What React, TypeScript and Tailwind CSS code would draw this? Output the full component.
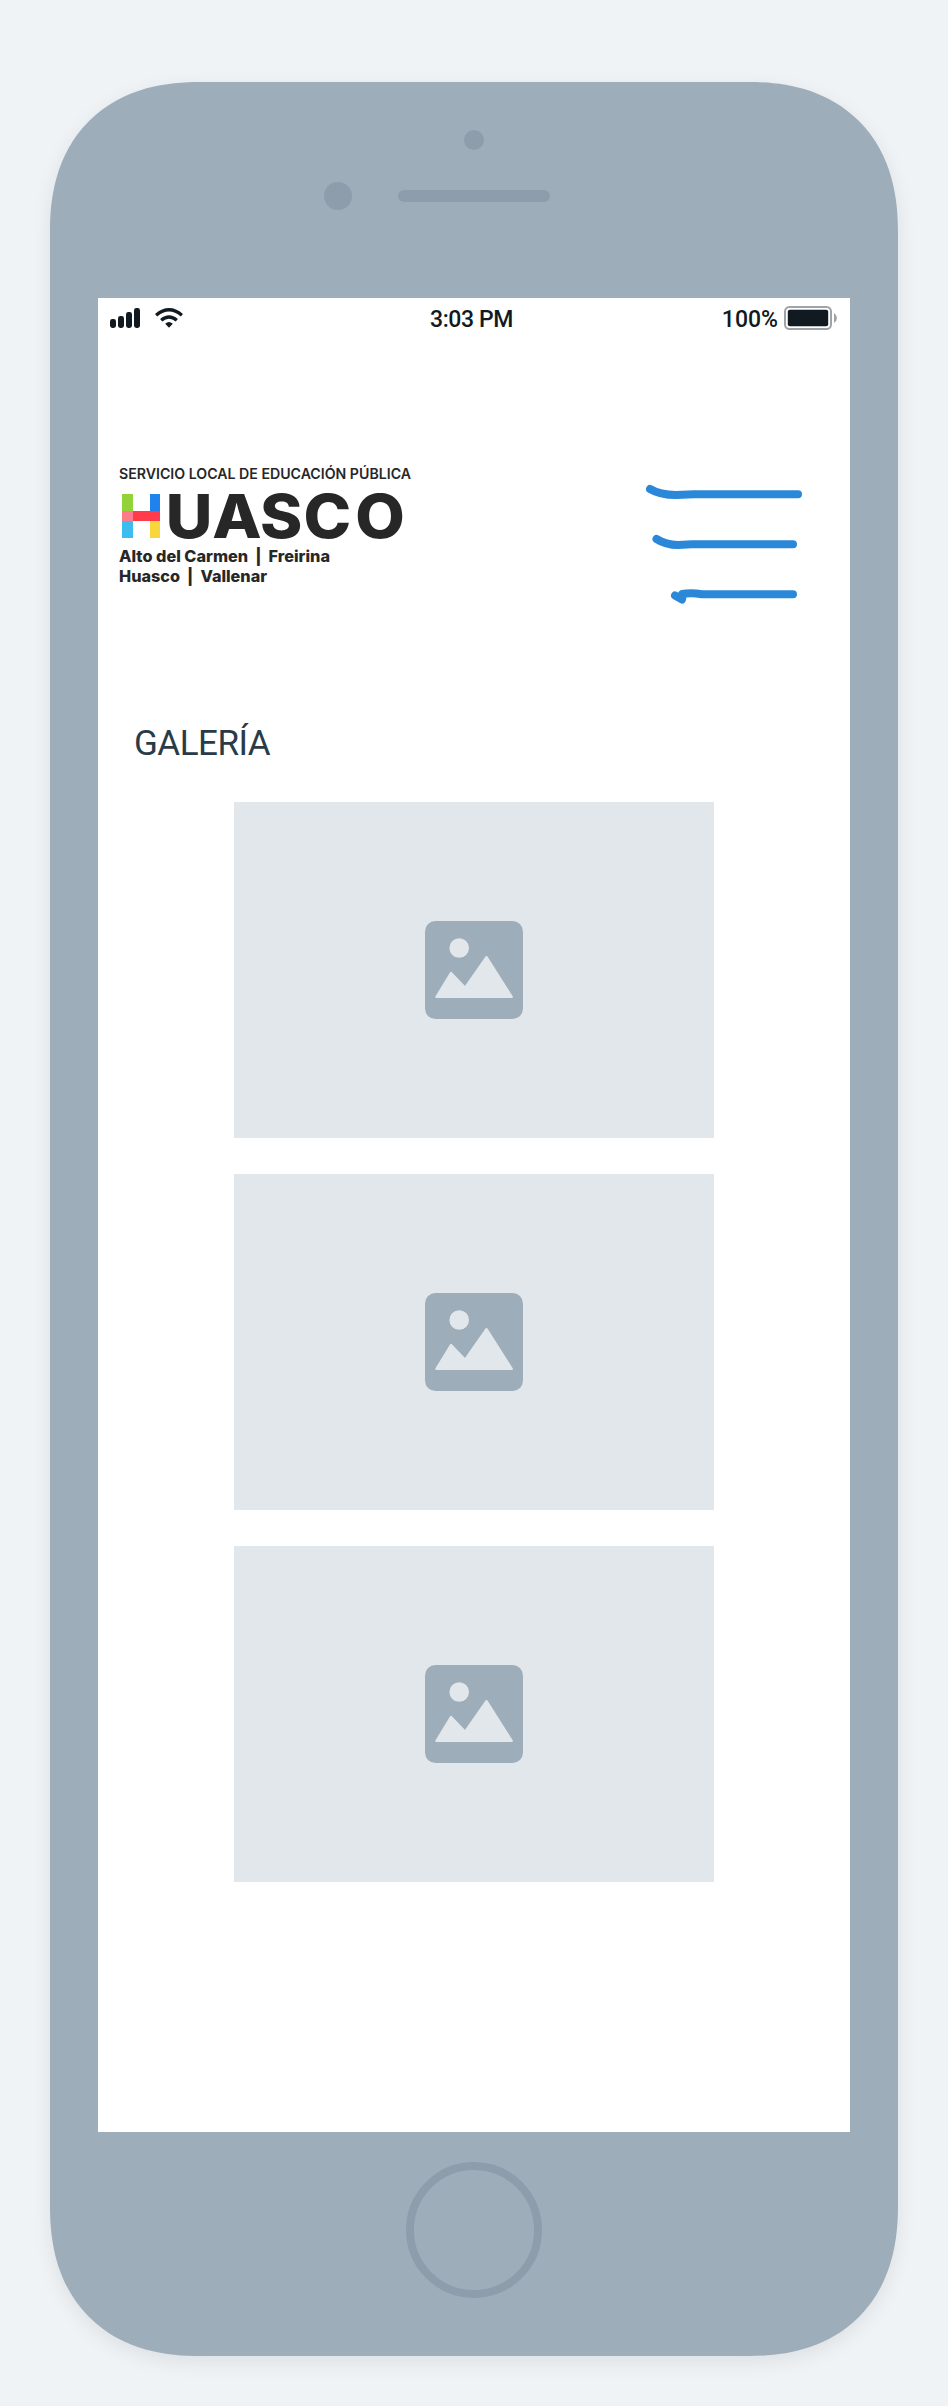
function SignalIcon() {
  return (
    <svg className="h-5 w-[30px]" viewBox="0 0 30 20" fill="#111a21">
      <rect x="0" y="11" width="6" height="9" rx="2.4" />
      <rect x="8" y="8" width="6" height="12" rx="2.4" />
      <rect x="16" y="4" width="6" height="16" rx="2.4" />
      <rect x="24" y="0" width="6" height="20" rx="2.4" />
    </svg>
  );
}

function WifiIcon() {
  return (
    <svg className="h-5 w-7" viewBox="0 0 28 20" fill="none" stroke="#111a21">
      <path d="M1.1 7.3 Q14 -3.7 26.9 7.3" strokeWidth="3.4" />
      <path d="M6.2 12.2 Q14 5.6 21.8 12.2" strokeWidth="3.4" />
      <path d="M10.2 15.8 Q14 12.4 17.8 15.8 L14 19.8 Z" fill="#111a21" stroke="none" />
    </svg>
  );
}

function BatteryIcon() {
  return (
    <svg className="h-6 w-[53px]" viewBox="0 0 53 24">
      <rect x="1" y="1" width="46" height="22" rx="4.5" fill="none" stroke="#a0a3a6" strokeWidth="2" />
      <rect x="3.8" y="3.8" width="40.4" height="16.4" rx="2" fill="#111a21" />
      <path d="M50 7 Q53 9 53 12 Q53 15 50 17 Z" fill="#a0a3a6" />
    </svg>
  );
}

function StatusBar() {
  return (
    <div className="grid h-10 grid-cols-3 items-center pr-[13px] pl-3 text-[23px] font-medium text-[#111a21]">
      <div className="flex items-center gap-[15px]">
        <SignalIcon />
        <WifiIcon />
      </div>
      <div className="pt-0.5 pr-1 text-center leading-none tracking-[-0.4px] whitespace-nowrap">3:03 PM</div>
      <div className="flex items-center justify-end gap-[6px]">
        <span className="pt-0.5 leading-none">100%</span>
        <BatteryIcon />
      </div>
    </div>
  );
}

function Logo() {
  return (
    <svg className="h-[130px] w-[300px] font-[Inter,sans-serif]" viewBox="0 0 300 130" fill="#272727">
      <text x="1" y="19" fontSize="14.2" fontWeight="600" textLength="292" lengthAdjust="spacingAndGlyphs">
        SERVICIO LOCAL DE EDUCACIÓN PÚBLICA
      </text>
      <rect x="4" y="34" width="11" height="18" fill="#93d33a" />
      <rect x="32" y="34" width="10" height="18" fill="#2083ec" />
      <rect x="4" y="61" width="11" height="17" fill="#3bbdf0" />
      <rect x="32" y="61" width="10" height="17" fill="#fad63d" />
      <rect x="4" y="51" width="11" height="10" fill="#ff7a8b" />
      <rect x="15" y="51" width="27" height="10" fill="#ff3b4c" />
      <text transform="scale(1.07 1)" x="44.6 88.2 132.8 173.4 221.8" y="78" fontSize="60" fontWeight="800">
        UASCO
      </text>
      <text x="1" y="102" fontSize="15.8" fontWeight="800" textLength="211" lengthAdjust="spacingAndGlyphs">
        {"Alto del Carmen\u00a0 |\u00a0 Freirina"}
      </text>
      <text x="1" y="121.7" fontSize="15.8" fontWeight="800" textLength="148" lengthAdjust="spacingAndGlyphs">
        {"Huasco\u00a0 |\u00a0 Vallenar"}
      </text>
    </svg>
  );
}

function MenuScribble() {
  return (
    <svg className="h-[120px] w-[158px]" viewBox="0 0 158 120" fill="none" stroke="#2b88d9" strokeWidth="8" strokeLinecap="round" strokeLinejoin="round">
      <path d="M4 5 Q14 11 30 11 L48 10.2 H152" />
      <path d="M10.5 55 Q20 61 32 61 L46 60.2 H147" />
      <path d="M29 111.5 L36 115.5 L37 111 L36 110 Q45 108.5 56 110.2 H147" />
    </svg>
  );
}

function ImagePlaceholder() {
  return (
    <div className="flex h-[336px] w-[480px] items-center justify-center bg-[#e2e7eb]">
      <svg className="size-[98px]" viewBox="0 0 98 98">
        <rect width="98" height="98" rx="10.5" fill="#9eadba" />
        <circle cx="34.2" cy="27" r="9.8" fill="#e2e7eb" />
        <path
          d="M11.5 75.8 L26 52 L40.2 66.8 L61.5 36.2 L86.7 75.8 Z"
          fill="#e2e7eb"
          stroke="#e2e7eb"
          strokeWidth="2.4"
          strokeLinejoin="round"
        />
      </svg>
    </div>
  );
}

export default function App() {
  return (
    <div className="flex h-[2406px] w-[948px] justify-center bg-[#eff3f6] pt-[82px] font-[Roboto,sans-serif]">
      <div className="flex h-[2274px] w-[848px] flex-col items-center rounded-[150px] bg-[#9eadba] pt-12 shadow-[0_6px_20px_rgba(0,0,0,0.08)] [corner-shape:superellipse(1.2)]">
        <div className="size-5 rounded-full bg-[#8d9dac]" />
        <div className="mt-8 flex w-full items-center pl-[274px]">
          <div className="size-7 rounded-full bg-[#8d9dac]" />
          <div className="ml-[46px] h-3 w-[152px] rounded-full bg-[#8d9dac]" />
        </div>
        <main className="mt-[88px] h-[1834px] w-[752px] bg-white">
          <StatusBar />
          <header className="flex items-start justify-between pt-[122px] pr-[46px] pl-5">
            <Logo />
            <div className="pt-[24px]">
              <MenuScribble />
            </div>
          </header>
          <h1 className="mt-[120px] pl-9 text-[35px] leading-[40px] tracking-[-0.5px] text-[#293b49]">GALERÍA</h1>
          <div className="mt-[38px] flex flex-col items-center gap-9">
            <ImagePlaceholder />
            <ImagePlaceholder />
            <ImagePlaceholder />
          </div>
        </main>
        <div className="mt-[30px] size-[136px] rounded-full border-8 border-[#8d9dac]" />
      </div>
    </div>
  );
}
